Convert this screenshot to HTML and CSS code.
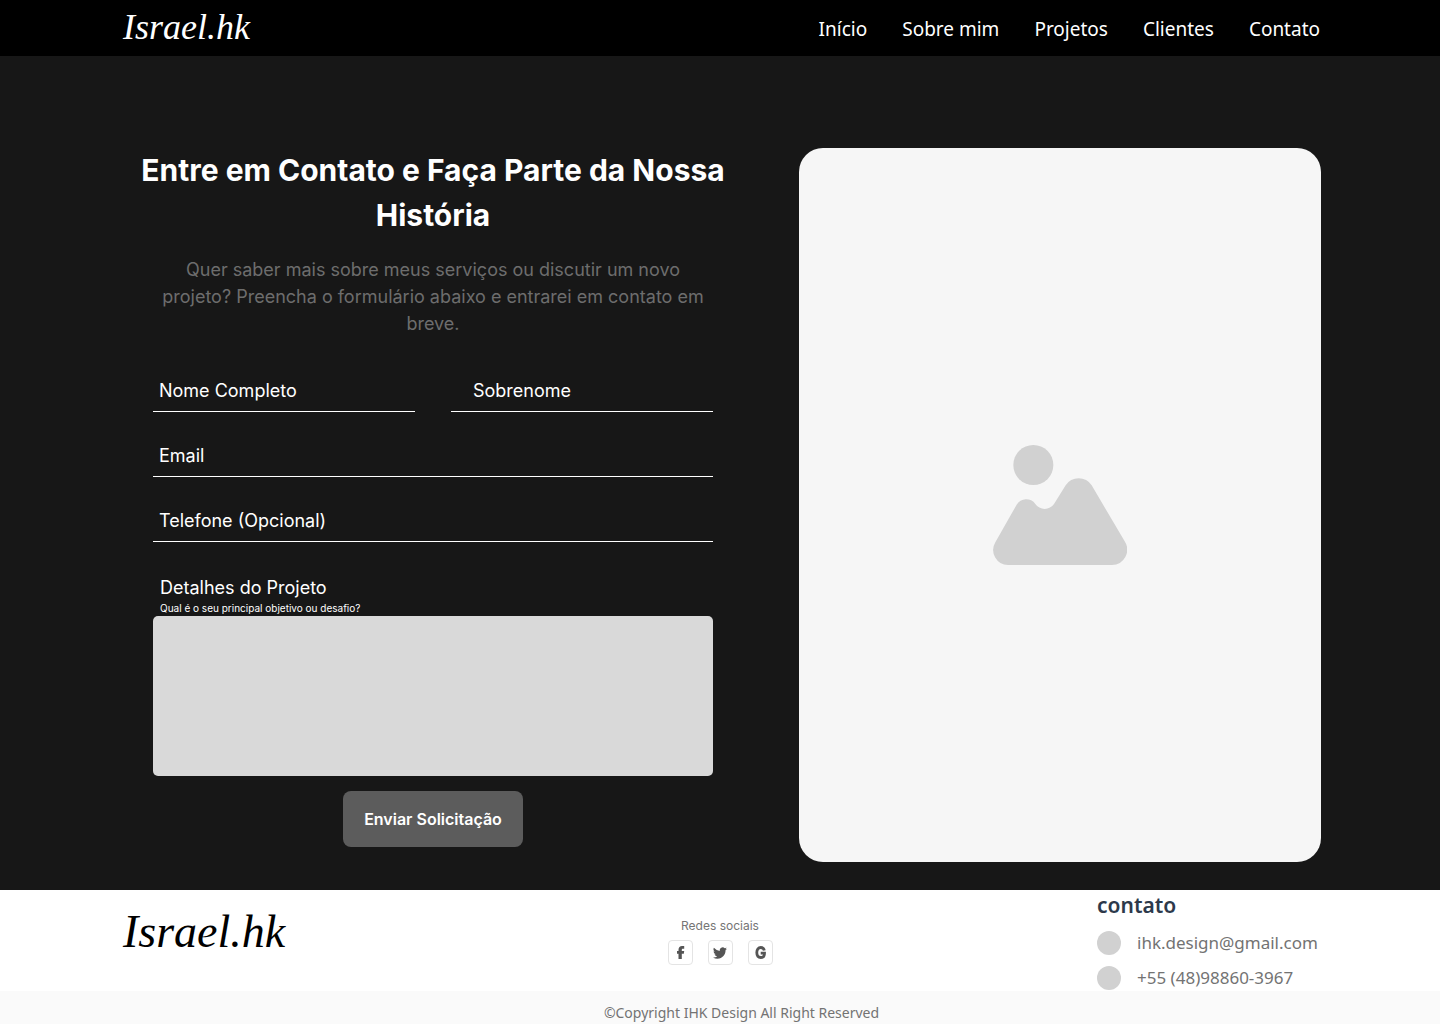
FILE: index.html
```html
<!DOCTYPE html>
<html lang="pt-BR">
<head>
  <meta charset="utf-8">
  <meta name="viewport" content="width=device-width, initial-scale=1">
  <title>Contato</title>
  <link rel="stylesheet" href="styles.css">
</head>
<body>
  <header class="header">
    <a class="logo" href="#">Israel.hk</a>
    <nav class="nav">
      <a href="#">Início</a>
      <a href="#">Sobre mim</a>
      <a href="#">Projetos</a>
      <a href="#">Clientes</a>
      <a href="#">Contato</a>
    </nav>
  </header>

  <main class="main">
    <section class="contact">
      <h1 class="title">Entre em Contato e Faça Parte da Nossa História</h1>
      <p class="intro">Quer saber mais sobre meus serviços ou discutir um novo projeto? Preencha o formulário abaixo e entrarei em contato em breve.</p>
      <form class="form">
        <div class="field-row">
          <div class="field">
            <label for="nome">Nome Completo</label>
            <input id="nome" type="text">
          </div>
          <div class="field field-inset">
            <label for="sobrenome">Sobrenome</label>
            <input id="sobrenome" type="text">
          </div>
        </div>
        <div class="field">
          <label for="email">Email</label>
          <input id="email" type="email">
        </div>
        <div class="field">
          <label for="telefone">Telefone (Opcional)</label>
          <input id="telefone" type="tel">
        </div>
        <div class="details">
          <label for="detalhes">Detalhes do Projeto</label>
          <small id="dica">Qual é o seu principal objetivo ou desafio?</small>
          <textarea id="detalhes" aria-describedby="dica"></textarea>
        </div>
        <button class="submit" type="submit">Enviar Solicitação</button>
      </form>
    </section>
    <div class="photo">
      <svg width="134" height="120" viewBox="39 45 402 360" fill="#d1d1d1" aria-hidden="true">
        <circle cx="160" cy="105" r="60"/>
        <path d="M85 405A45 45 0 0 1 46 337L110 224A33 33 0 0 1 166 222A34 34 0 0 0 222 222L257 166A46 46 0 0 1 335 166L434 334A46 46 0 0 1 396 405Z"/>
      </svg>
    </div>
  </main>

  <footer>
    <div class="footer">
      <a class="logo logo-large" href="#">Israel.hk</a>
      <div class="social">
        <span>Redes sociais</span>
        <div class="social-links">
          <a href="#" aria-label="Facebook">
            <svg width="13" height="13" viewBox="0 0 13 13" aria-hidden="true"><path fill="#555" d="M4.500 13V7.800H3V5h1.500V3.800C4.500 1.300 5.900 0 8 0h2.200v2.700H8.900c-.8 0-1.100.4-1.100 1.100V5h2.400l-.4 2.800h-2V13z"/></svg>
          </a>
          <a href="#" aria-label="Twitter">
            <svg width="14" height="14" viewBox="0 0 24 24" aria-hidden="true"><path fill="#555" d="M23.900 4.600a10 10 0 0 1-2.800.8 5 5 0 0 0 2.100-2.700 10 10 0 0 1-3.100 1.200 4.900 4.900 0 0 0-8.400 4.500A14 14 0 0 1 1.600 3.200a4.900 4.900 0 0 0 1.600 6.500 5 5 0 0 1-2.300-.6v.1a4.900 4.900 0 0 0 4 4.800 5 5 0 0 1-2.300.1 4.900 4.900 0 0 0 4.600 3.400A9.900 9.900 0 0 1 0 19.500a14 14 0 0 0 7.500 2.200c9.100 0 14-7.500 14-14v-.6a10 10 0 0 0 2.400-2.500z"/></svg>
          </a>
          <a href="#" aria-label="Google">
            <svg width="13" height="13" viewBox="0 0 13 13" aria-hidden="true"><path fill="none" stroke="#555" stroke-width="2.800" d="M10.300 4.400C9.900 2.400 8.600 1.500 6.800 1.500C4.400 1.500 2.800 3.400 2.800 6.500C2.800 9.600 4.400 11.500 6.800 11.500C9 11.500 10.500 10.200 10.500 7.200H6.700"/></svg>
          </a>
        </div>
      </div>
      <address class="info">
        <h2>contato</h2>
        <a href="mailto:ihk.design@gmail.com">ihk.design@gmail.com</a>
        <a href="tel:+5548988603967">+55 (48)98860-3967</a>
      </address>
    </div>
    <p class="copyright">©Copyright IHK Design All Right Reserved</p>
  </footer>
</body>
</html>
```
FILE: styles.css
```css
* {
  box-sizing: border-box;
}

body {
  margin: 0;
  min-height: 100vh;
  display: flex;
  flex-direction: column;
  background: #fafafa;
  font-family: Inter, sans-serif;
}

a {
  color: inherit;
  text-decoration: none;
}

.header {
  display: flex;
  align-items: center;
  justify-content: space-between;
  min-height: 56px;
  padding: 2px 120px 0;
  background: #000;
  color: #fff;
}

.logo {
  padding: 0 0 4px 3px;
  font: italic 36px/44px "Liberation Serif", serif;
}

.logo-large {
  font-size: 46px;
}

.nav {
  display: flex;
  gap: 35px;
  font: 19px/28px "Noto Sans", sans-serif;
}

.main {
  display: grid;
  grid-template-columns: minmax(0, 1fr) 522px;
  gap: 53px;
  padding: 92px 119px 28px 120px;
  background: #171717;
  color: #fff;
}

.title {
  margin: 0 0 18px;
  font-size: 30px;
  line-height: 45px;
  font-weight: 700;
  text-align: center;
}

.intro {
  max-width: 548px;
  margin: 0 auto 40px;
  color: #6d6d6d;
  font-size: 18px;
  line-height: 27px;
  text-align: center;
}

.form {
  display: flex;
  flex-direction: column;
  gap: 30px;
  max-width: 560px;
  margin: 0 auto;
  font-size: 18px;
  line-height: 27px;
}

.field-row {
  display: grid;
  grid-template-columns: repeat(2, minmax(0, 1fr));
  gap: 36px;
}

.field {
  display: flex;
  gap: 8px;
  padding: 0 6px 7px;
  border-bottom: 1px solid #fff;
}

.field-inset {
  padding-left: 22px;
}

.field label {
  white-space: nowrap;
}

.field input {
  flex: 1;
  width: 0;
  min-width: 0;
  padding: 0;
  border: 0;
  outline: 0;
  background: none;
  color: inherit;
  font: inherit;
}

.details {
  display: flex;
  flex-direction: column;
  padding-top: 2px;
}

.details label,
.details small {
  padding-left: 7px;
}

.details small {
  font-size: 10px;
  line-height: 15px;
}

.details textarea {
  height: 160px;
  padding: 12px;
  border: 0;
  border-radius: 5px;
  background: #d9d9d9;
  font: inherit;
  resize: none;
}

.submit {
  align-self: center;
  margin-top: -15px;
  width: 180px;
  height: 56px;
  border: 0;
  border-radius: 8px;
  background: #5c5c5c;
  color: #fff;
  font: 600 16px/24px Inter, sans-serif;
}

.photo {
  display: flex;
  align-items: center;
  justify-content: center;
  min-height: 714px;
  border-radius: 24px;
  background: #f6f6f6;
}

.footer {
  display: grid;
  grid-template-columns: 1fr auto 1fr;
  min-height: 101px;
  padding: 0 120px;
  background: #fff;
}

.footer .logo {
  padding-top: 20px;
}

.social {
  display: flex;
  flex-direction: column;
  align-items: center;
  gap: 5px;
  padding-top: 27px;
  color: #757575;
  font-size: 12px;
  line-height: 18px;
}

.social-links {
  display: flex;
  gap: 15px;
}

.social-links a {
  display: flex;
  align-items: center;
  justify-content: center;
  width: 25px;
  height: 25px;
  border: 1px solid #e4e4e4;
  border-radius: 4px;
}

.info {
  display: flex;
  flex-direction: column;
  justify-self: end;
  gap: 11px;
  min-width: 223px;
  color: #737373;
  font: 17px/24px "Noto Sans", sans-serif;
}

.info h2 {
  margin: 0;
  color: #2d394b;
  font-size: 21px;
  line-height: 30px;
  font-weight: 600;
}

.info a {
  display: flex;
  gap: 16px;
}

.info a::before {
  content: "";
  width: 24px;
  height: 24px;
  border-radius: 50%;
  background: #d1d1d1;
}

.copyright {
  margin: 0;
  padding: 11px 0 1px 43px;
  color: #737373;
  font: 14px/21px "Noto Sans", sans-serif;
  text-align: center;
}
```
